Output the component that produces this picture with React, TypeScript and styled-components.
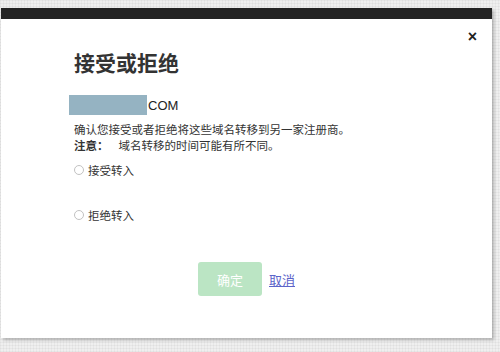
import React from "react";
import styled, { createGlobalStyle } from "styled-components";

const Global = createGlobalStyle`
  html, body { margin: 0; padding: 0; }
  body {
    width: 500px;
    height: 352px;
    overflow: hidden;
    font-family: "Helvetica Neue", "Liberation Sans", "Noto Sans CJK SC", sans-serif;
    background-color: #efefef;
    background-image:
      repeating-linear-gradient(0deg, rgba(0,0,0,0.035) 0 1px, transparent 1px 3px),
      repeating-linear-gradient(90deg, rgba(0,0,0,0.035) 0 1px, transparent 1px 3px);
  }
`;

const Page = styled.div`
  padding: 8px 0 0 1px;
`;

const Modal = styled.div`
  width: 491px;
  height: 330px;
  background: #fff;
  box-shadow: 2px 2px 3px rgba(0, 0, 0, 0.25);
  display: flex;
  flex-direction: column;
  position: relative;
`;

const TopBar = styled.div`
  height: 11px;
  background: #242424;
`;

const Close = styled.button`
  position: absolute;
  top: 19px;
  right: 15px;
  border: 0;
  background: none;
  padding: 0;
  font-family: "Liberation Sans", sans-serif;
  font-size: 16px;
  font-weight: 700;
  color: #222;
  line-height: 20px;
  cursor: pointer;
`;

const Body = styled.div`
  padding: 28px 0 0 73px;
  display: flex;
  flex-direction: column;
`;

const Title = styled.h2`
  margin: 0;
  font-family: "Noto Sans CJK SC", sans-serif;
  font-size: 21px;
  font-weight: 700;
  color: #333;
  line-height: 30px;
`;

const DomainRow = styled.div`
  display: flex;
  align-items: center;
  margin-top: 18px;
  margin-left: -5px;
  height: 20px;
`;

const Mask = styled.div`
  width: 78px;
  height: 20px;
  background: #95b3c2;
`;

const DomainText = styled.span`
  font-family: "Liberation Sans", sans-serif;
  font-size: 13px;
  color: #222;
  margin-left: 1px;
`;

const Paragraph = styled.p`
  margin: 6px 0 0;
  font-family: "Noto Sans CJK SC", sans-serif;
  font-size: 11.5px;
  line-height: 16px;
  color: #333;
`;

const Strong = styled.b`
  font-weight: 700;
  margin-right: 10px;
`;

const RadioRow = styled.label<{ $gap: number }>`
  display: flex;
  align-items: center;
  margin-top: ${(p) => p.$gap}px;
  font-family: "Noto Sans CJK SC", sans-serif;
  font-size: 11.5px;
  color: #333;
  line-height: 16px;
`;

const RadioCircle = styled.span`
  width: 10px;
  height: 10px;
  border-radius: 50%;
  border: 1px solid #c2c2c2;
  background: #fff;
  margin-right: 4px;
  box-sizing: border-box;
`;

const Actions = styled.div`
  display: flex;
  align-items: center;
  margin-top: 39px;
  margin-left: 124px;
  gap: 7px;
`;

const Confirm = styled.button`
  width: 64px;
  height: 34px;
  border: 0;
  border-radius: 3px;
  background: #bbe5c4;
  color: #fff;
  font-family: "Noto Sans CJK SC", sans-serif;
  font-size: 13px;
`;

const Cancel = styled.a`
  font-family: "Noto Sans CJK SC", sans-serif;
  font-size: 13px;
  color: #5c63c9;
  text-decoration: underline;
  cursor: pointer;
`;

export default function App() {
  return (
    <>
      <Global />
      <Page>
        <Modal>
          <TopBar />
          <Close aria-label="关闭">×</Close>
          <Body>
            <Title>接受或拒绝</Title>
            <DomainRow>
              <Mask />
              <DomainText>COM</DomainText>
            </DomainRow>
            <Paragraph>
              确认您接受或者拒绝将这些域名转移到另一家注册商。
              <br />
              <Strong>注意：</Strong>域名转移的时间可能有所不同。
            </Paragraph>
            <RadioRow $gap={9}>
              <RadioCircle />
              接受转入
            </RadioRow>
            <RadioRow $gap={29}>
              <RadioCircle />
              拒绝转入
            </RadioRow>
            <Actions>
              <Confirm>确定</Confirm>
              <Cancel>取消</Cancel>
            </Actions>
          </Body>
        </Modal>
      </Page>
    </>
  );
}
